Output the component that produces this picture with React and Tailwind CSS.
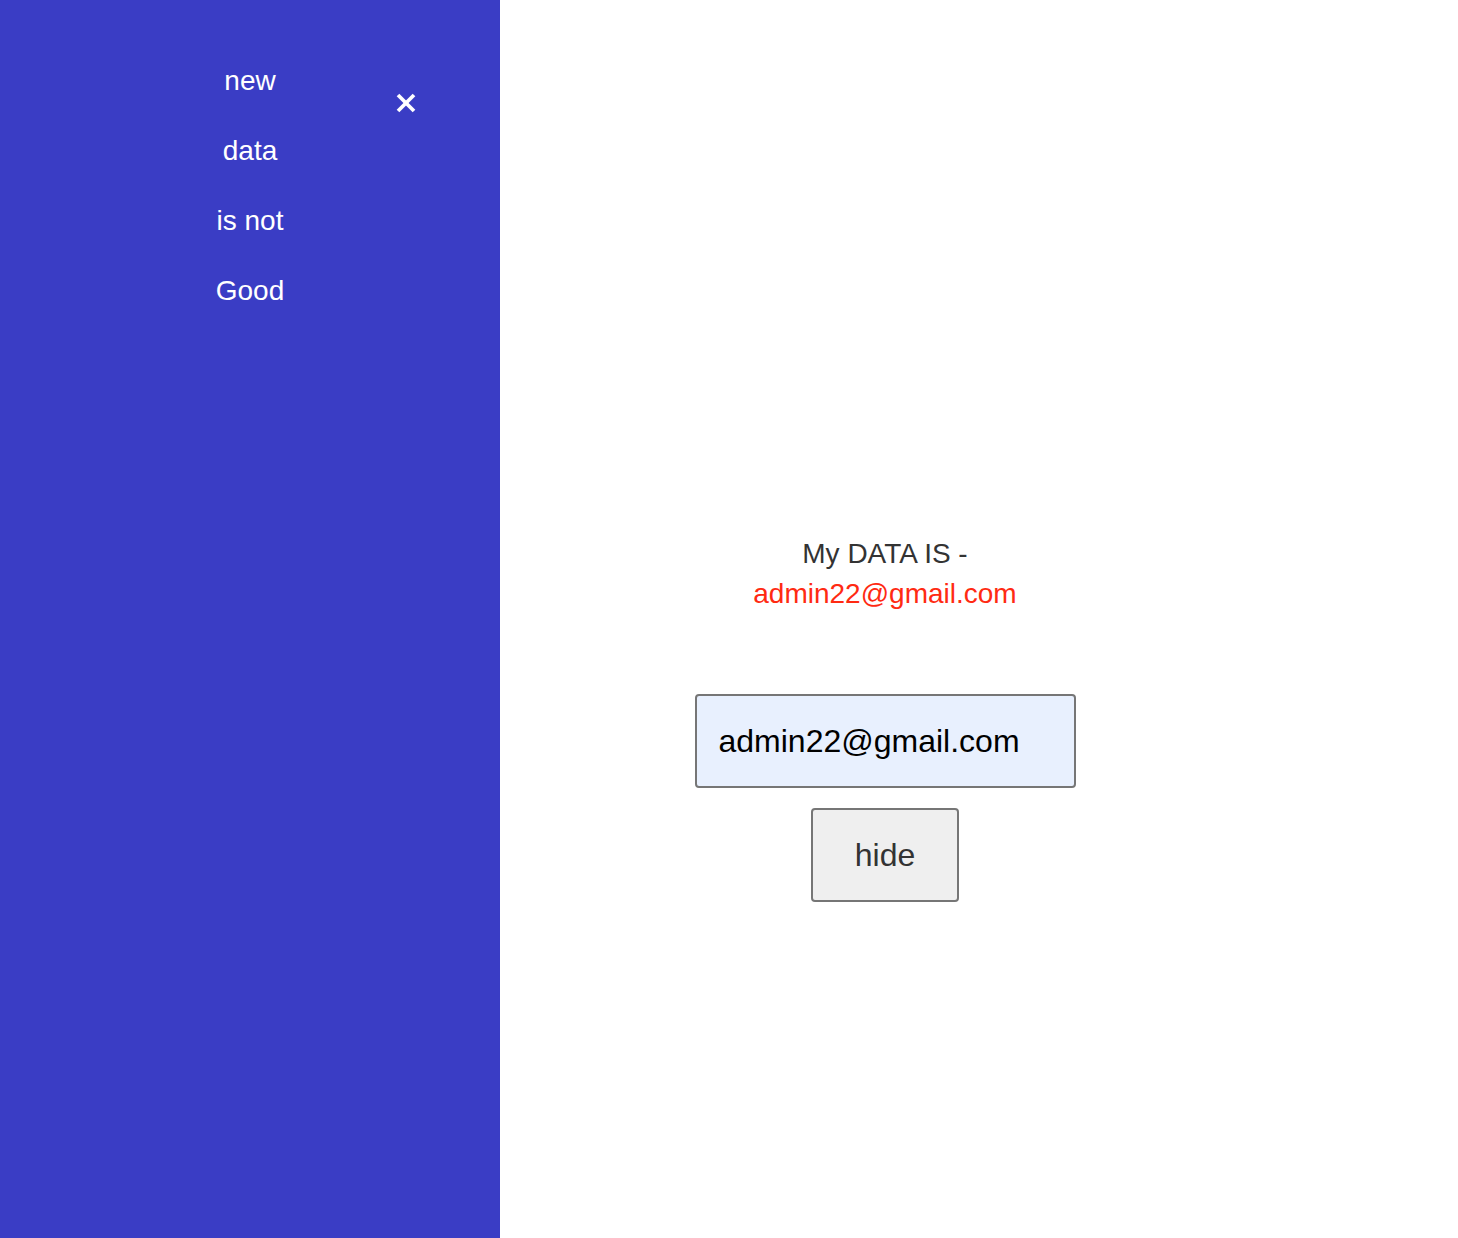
import React, { useState } from 'react';

const items = ['new', 'data', 'is not', 'Good'];

const Sidebar = () => (
  <aside className="relative w-[500px] shrink-0 bg-[#3a3dc5] text-white">
    {/* menu links */}
    <ul className="flex flex-col items-center pt-[61px]">
      {items.map(item => (
        <li key={item} className="h-[70px] leading-[40px] text-[28px]">{item}</li>
      ))}
    </ul>
    <button className="absolute left-[396px] top-[93px] w-5 h-5">
      <svg viewBox="0 0 20 20" className="w-5 h-5" stroke="white" strokeWidth="3.8" strokeLinecap="butt">
        <line x1="2" y1="2" x2="18" y2="18" />
        <line x1="18" y1="2" x2="2" y2="18" />
      </svg>
    </button>
  </aside>
);

export default function App() {
  const [email, setEmail] = useState('admin22@gmail.com');

  return (
    <div className="flex min-h-[1238px] font-['Liberation_Sans',Arial,sans-serif]">
      <Sidebar />
      <main className="flex-1">
        <div className="w-[770px] flex flex-col items-center pt-[534px]">
          <p className="text-[28px] leading-[40px] text-[#333]">My DATA IS -</p>
          <p className="text-[28px] leading-[40px] text-[#ff2a12]">{email}</p>

          <input
            type="text"
            value={email}
            onChange={(e) => setEmail(e.target.value)}
            className="mt-[80px] w-[381px] h-[94px] px-[22px] bg-[#e8f0fe] border-2 border-[#767676] rounded-[4px] text-[32px] text-black outline-none"
          />
          <button className="mt-[20px] w-[148px] h-[94px] bg-[#efefef] border-2 border-[#767676] rounded-[4px] text-[32px] text-[#333]">
            hide
          </button>
        </div>
      </main>
    </div>
  );
}
